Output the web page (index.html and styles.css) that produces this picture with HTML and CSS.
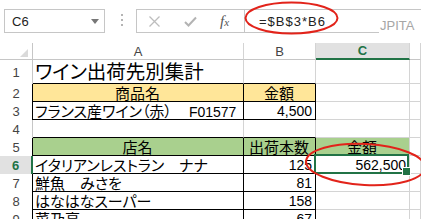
FILE: index.html
```html
<!DOCTYPE html>
<html lang="ja">
<head>
<meta charset="utf-8">
<title>ワイン出荷先別集計</title>
<link rel="stylesheet" href="styles.css">
</head>
<body>
<div class="toolbar">
  <div class="namebox"><span>C6</span><span class="dd"></span></div>
  <div class="grip"><i></i><i></i><i></i></div>
  <div class="fbtns">
    <svg class="ico-x" width="11" height="11" viewBox="0 0 11 11"><path d="M0.5 0.5 L10.5 10.5 M10.5 0.5 L0.5 10.5" stroke="#bdbdbd" stroke-width="1.3" fill="none"/></svg>
    <svg class="ico-ok" width="13" height="11" viewBox="0 0 13 11"><path d="M1 6 L4.5 9.5 L12 1.5" stroke="#b3b3b3" stroke-width="2" fill="none"/></svg>
    <span class="fx">f<span class="fx-x">x</span></span>
  </div>
  <div class="finput">=$B$3*B6</div>
  <span class="wm">JPITA</span>
</div>
<div class="sheet">
  <div class="corner"><svg width="8" height="8" viewBox="0 0 8 8"><path d="M8 0 L8 8 L0 8 Z" fill="#dadada"/></svg></div>
  <div class="ch">A</div>
  <div class="ch">B</div>
  <div class="ch ch-sel">C</div>
  <div class="ch"></div>

  <div class="rh">1</div>
  <div class="c title bb">ワイン出荷先別集計</div>
  <div class="c bb"></div>
  <div class="c"></div>
  <div class="c"></div>

  <div class="rh rk">2</div>
  <div class="c yel ctr br bb">商品名</div>
  <div class="c yel ctr br bb">金額</div>
  <div class="c"></div>
  <div class="c"></div>

  <div class="rh rk">3</div>
  <div class="c br bb">フランス産ワイン（赤）　<span class="lat">F01577</span></div>
  <div class="c num br bb">4,500</div>
  <div class="c"></div>
  <div class="c"></div>

  <div class="rh">4</div>
  <div class="c bb"></div>
  <div class="c bb"></div>
  <div class="c"></div>
  <div class="c"></div>

  <div class="rh rk">5</div>
  <div class="c grn ctr br bb">店名</div>
  <div class="c grn ctr br bb">出荷本数</div>
  <div class="c grn ctr">金額</div>
  <div class="c"></div>

  <div class="rh rh-sel">6</div>
  <div class="c br bb">イタリアンレストラン　ナナ</div>
  <div class="c num br bb">125</div>
  <div class="c num sel">562,500</div>
  <div class="c"></div>

  <div class="rh rk">7</div>
  <div class="c br bb">鮮魚　みさを</div>
  <div class="c num br bb">81</div>
  <div class="c"></div>
  <div class="c"></div>

  <div class="rh rk">8</div>
  <div class="c br bb">はなはなスーパー</div>
  <div class="c num br bb">158</div>
  <div class="c"></div>
  <div class="c"></div>

  <div class="rh rk">9</div>
  <div class="c br bb">菜乃亭</div>
  <div class="c num br bb">67</div>
  <div class="c"></div>
  <div class="c"></div>
</div>
<svg class="marks" width="421" height="219" viewBox="0 0 421 219">
  <ellipse cx="291.5" cy="18" rx="46" ry="15.5" fill="none" stroke="#e2231a" stroke-width="2"/>
  <ellipse cx="365.5" cy="164.5" rx="59.5" ry="20.5" fill="none" stroke="#e2231a" stroke-width="2" transform="rotate(3 365.5 164.5)"/>
</svg>
</body>
</html>
```
FILE: styles.css
```css
* { box-sizing: border-box; }
html, body { margin: 0; padding: 0; }
body {
  width: 421px;
  height: 219px;
  overflow: hidden;
  position: relative;
  background: #fff;
  font-family: "Liberation Sans", "Noto Sans CJK JP", sans-serif;
  color: #000;
}

/* ---------- formula bar ---------- */
.toolbar {
  height: 43px;
  display: flex;
  align-items: flex-start;
  padding: 9px 0 0 4px;
}
.namebox {
  width: 101px;
  height: 24px;
  border: 1px solid #c6c6c6;
  display: flex;
  align-items: center;
  justify-content: space-between;
  padding: 0 5px 0 7px;
  font-size: 13px;
  color: #222;
}
.dd {
  width: 0;
  height: 0;
  border-left: 4px solid transparent;
  border-right: 4px solid transparent;
  border-top: 5px solid #777;
}
.grip {
  display: flex;
  flex-direction: column;
  gap: 3px;
  margin: 5px 13px 0 16px;
}
.grip i {
  display: block;
  width: 2px;
  height: 2px;
  background: #b4b4b4;
}
.fbtns {
  width: 109px;
  height: 24px;
  border: 1px solid #c6c6c6;
  display: flex;
  align-items: center;
  padding-left: 12px;
}
.ico-x { margin-top: 1px; }
.ico-ok { margin-left: 24px; margin-top: 1px; }
.fx {
  margin-left: 23px;
  font-family: "Liberation Serif", serif;
  font-style: italic;
  font-size: 15px;
  color: #555;
  line-height: 1;
}
.fx-x { font-size: 11px; }
.finput {
  flex: 1;
  height: 24px;
  margin-right: -4px;
  border: 1px solid #c6c6c6;
  border-left: none;
  padding-left: 14px;
  display: flex;
  align-items: center;
  font-size: 13px;
  letter-spacing: 1px;
  color: #222;
}
.wm {
  position: absolute;
  left: 379px;
  top: 19px;
  padding: 0 10px 3px 1px;
  background: #fff;
  font-size: 13px;
  line-height: 13px;
  color: #a6a6a6;
}

/* ---------- sheet ---------- */
.sheet {
  display: grid;
  grid-template-columns: 33px 211px 72px 94px 11px;
  grid-template-rows: 17px 24px repeat(8, 18px);
  font-size: 15px;
  font-feature-settings: "palt" 1;
}
.corner {
  border-right: 1px solid #c6c6c6;
  border-bottom: 1px solid #c6c6c6;
  display: flex;
  align-items: flex-end;
  justify-content: flex-end;
  padding: 0 4px 2px 0;
}
.corner svg { display: block; }
.ch {
  border-right: 1px solid #d4d4d4;
  border-bottom: 1px solid #c6c6c6;
  display: flex;
  align-items: center;
  justify-content: center;
  font-size: 13px;
  color: #444;
}
.ch-sel {
  background: #e1e1e1;
  color: #217346;
  font-weight: bold;
  border-bottom: 2px solid #217346;
}
.rh {
  border-right: 1px solid #c6c6c6;
  display: flex;
  align-items: center;
  justify-content: center;
  font-size: 13px;
  color: #444;
}
.rk { border-right-color: #000; }
.rh-sel {
  background: #e1e1e1;
  color: #217346;
  font-weight: bold;
  border-right: 2px solid #217346;
}
.c {
  border-right: 1px solid #d4d4d4;
  border-bottom: 1px solid #d4d4d4;
  display: flex;
  align-items: flex-end;
  padding: 0 3px 0 2px;
  white-space: nowrap;
  line-height: 1;
}
.br { border-right-color: #000; }
.bb { border-bottom-color: #000; }
.ctr { justify-content: center; }
.num {
  justify-content: flex-end;
  font-size: 14px;
  padding-bottom: 1px;
}
.lat { font-size: 14px; margin-left: 2px; }
.yel { background: #ffe699; }
.grn { background: #a9d08e; }
.title {
  font-size: 19.5px;
  padding-bottom: 1px;
}
.sel { position: relative; }
.sel::after {
  content: "";
  position: absolute;
  left: -2px;
  top: -2px;
  right: 0;
  bottom: -1px;
  border: 2px solid #217346;
}
.sel::before {
  content: "";
  position: absolute;
  right: -2px;
  bottom: -3px;
  width: 7px;
  height: 7px;
  background: #217346;
  border: 1px solid #fff;
  z-index: 1;
}

/* ---------- annotation marks ---------- */
.marks {
  position: absolute;
  left: 0;
  top: 0;
  pointer-events: none;
}
```
